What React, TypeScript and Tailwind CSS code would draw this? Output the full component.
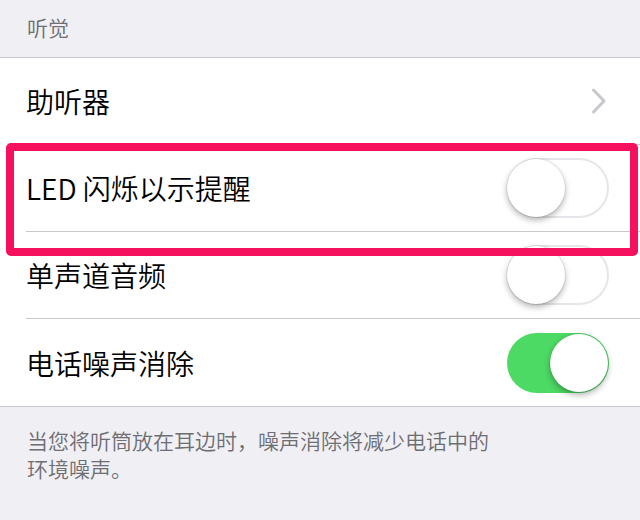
import React from "react"

type ToggleProps = {
  on: boolean
}

function Toggle({ on }: ToggleProps) {
  return (
    <div
      className={
        on
          ? "relative h-[60px] w-[102px] rounded-full bg-[#4cd964]"
          : "relative h-[60px] w-[102px] rounded-full border-2 border-[#e6e6ea] bg-white"
      }
    >
      <div
        className={
          on
            ? "absolute right-[1px] top-[1px] h-[58px] w-[58px] rounded-full bg-white shadow-[0_3px_6px_rgba(0,0,0,0.3),0_0_0_1px_rgba(0,0,0,0.06)]"
            : "absolute left-[-2px] top-[-1px] h-[58px] w-[58px] rounded-full bg-white shadow-[0_3px_6px_rgba(0,0,0,0.3),0_0_0_1px_rgba(0,0,0,0.06)]"
        }
      />
    </div>
  )
}

function Chevron() {
  return (
    <svg width="16" height="26" viewBox="0 0 16 26" fill="none">
      <path d="M2.5 2 L13 13 L2.5 24" stroke="#c7c7cc" strokeWidth="3" strokeLinecap="round" strokeLinejoin="round" />
    </svg>
  )
}

type RowProps = {
  label: string
  right: React.ReactNode
  last?: boolean
}

function Row({ label, right, last }: RowProps) {
  return (
    <div className="pl-[26px]">
      <div
        className={
          last
            ? "flex h-[87px] items-center justify-between pr-[31px]"
            : "flex h-[87px] items-center justify-between border-b border-[#c8c7cc] pr-[31px]"
        }
      >
        <span className="text-[28px] font-[350] leading-none text-black">{label}</span>
        {right}
      </div>
    </div>
  )
}

export default function App() {
  return (
    <div
      className="relative flex h-[520px] w-[640px] flex-col overflow-hidden bg-[#efeff4]"
      style={{ fontFamily: '"Noto Sans CJK SC", "Noto Sans", sans-serif' }}
    >
      <div className="flex h-[58px] items-center border-b border-[#c8c7cc] pl-[27px] pb-[2px]">
        <span className="text-[21px] font-[350] leading-none text-[#6d6d72]">听觉</span>
      </div>

      <div className="border-b border-[#c8c7cc] bg-white">
        <Row label="助听器" right={<div className="pr-[2px]"><Chevron /></div>} />
        <Row label="LED 闪烁以示提醒" right={<Toggle on={false} />} />
        <Row label="单声道音频" right={<Toggle on={false} />} />
        <Row label="电话噪声消除" right={<Toggle on={true} />} last />
      </div>

      <div className="px-[27px] pt-[19px] text-[21px] font-[350] leading-[28px] text-[#6d6d72]">
        当您将听筒放在耳边时，噪声消除将减少电话中的
        <br />
        环境噪声。
      </div>

      <div className="pointer-events-none absolute left-[6px] top-[143px] h-[113px] w-[632px] rounded-[5px] border-[8px] border-[#f5115d]" />
    </div>
  )
}
